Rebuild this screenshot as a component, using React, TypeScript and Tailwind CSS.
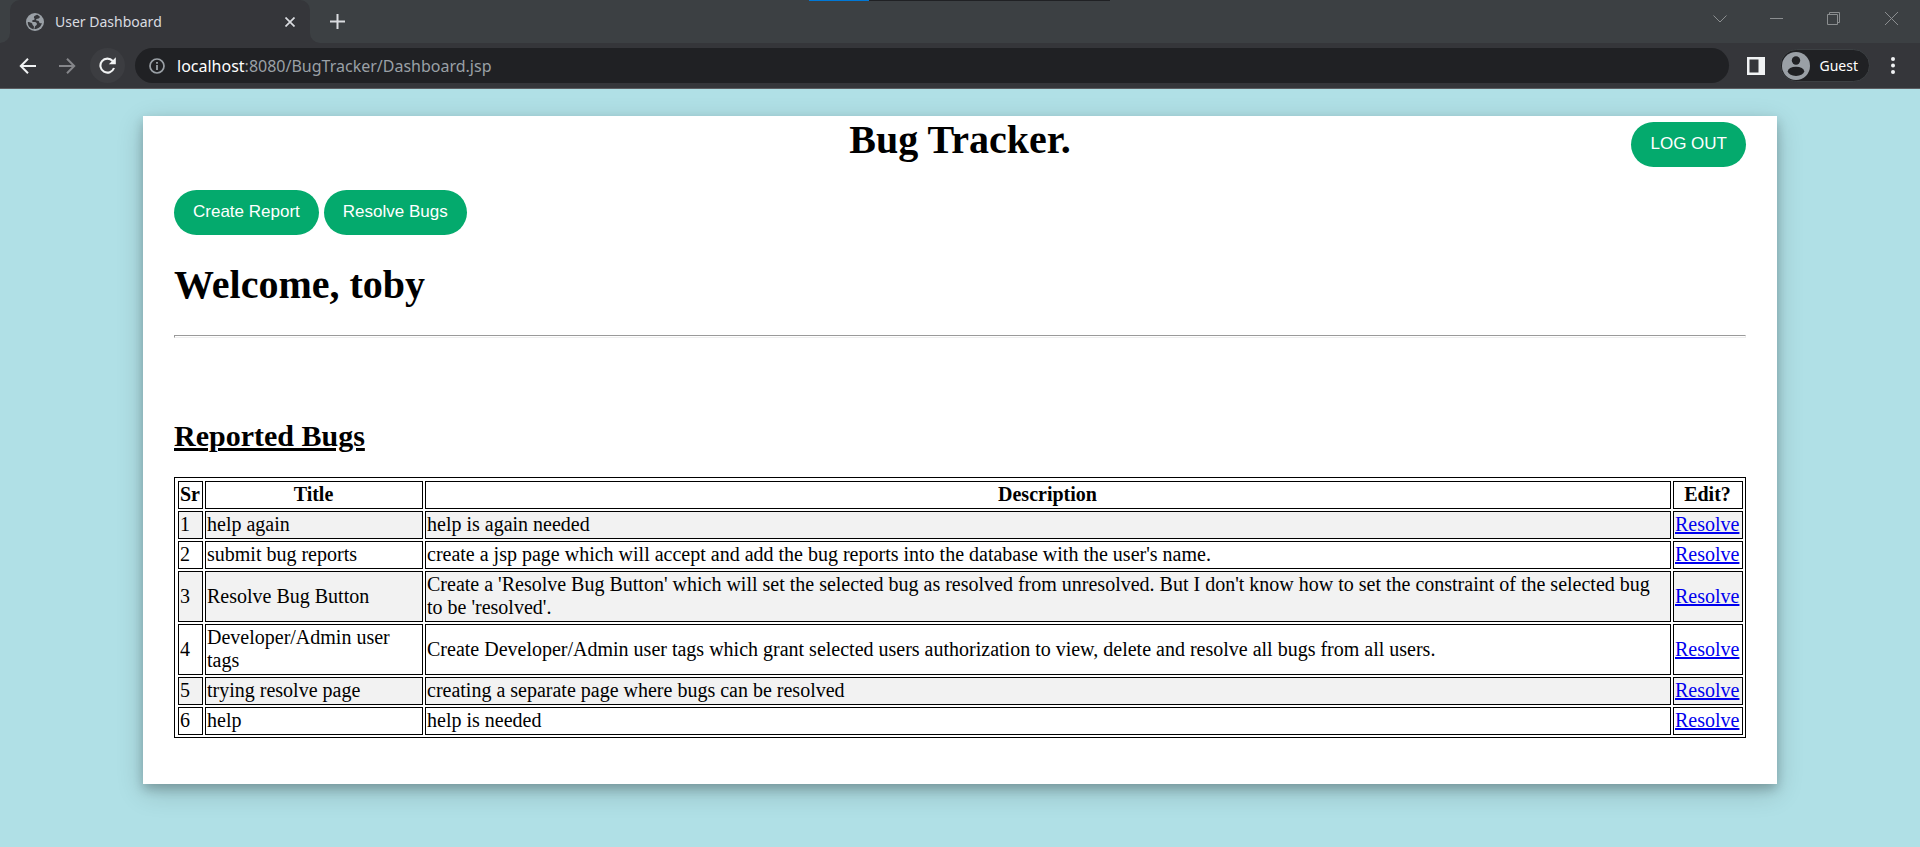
import React from "react";

type Bug = { id: number; title: string; description: string };

const bugs: Bug[] = [
  { id: 1, title: "help again", description: "help is again needed" },
  {
    id: 2,
    title: "submit bug reports",
    description: "create a jsp page which will accept and add the bug reports into the database with the user's name.",
  },
  {
    id: 3,
    title: "Resolve Bug Button",
    description:
      "Create a 'Resolve Bug Button' which will set the selected bug as resolved from unresolved. But I don't know how to set the constraint of the selected bug to be 'resolved'.",
  },
  {
    id: 4,
    title: "Developer/Admin user tags",
    description:
      "Create Developer/Admin user tags which grant selected users authorization to view, delete and resolve all bugs from all users.",
  },
  { id: 5, title: "trying resolve page", description: "creating a separate page where bugs can be resolved" },
  { id: 6, title: "help", description: "help is needed" },
];

function TabStrip() {
  return (
    <div className="relative flex h-[43px] items-stretch bg-[#3c4043]">
      <div className="absolute left-1/2 top-0 -ml-[151px] flex h-px w-[301px] bg-[#202124]">
        <span className="w-[60px] bg-[#0078d7]" />
      </div>
      <svg className="mt-auto block" width="10" height="10" viewBox="0 0 10 10" aria-hidden="true">
        <path d="M10 0v10H0a10 10 0 0 0 10-10z" fill="#35363a" />
      </svg>
      <div className="flex w-[300px] items-center rounded-t-[10px] bg-[#35363a] pl-4 pr-[10px]">
        <svg width="18" height="18" viewBox="0 0 18 18" aria-hidden="true">
          <circle cx="9" cy="9" r="9" fill="#9aa0a6" />
          <path
            d="M11 1.800C9.600 2.500 8.100 2.900 7.900 4.200c-.1.900.9 1.200.7 2.100-.3 1-2 .5-2.500 1.500-.3.900.7 1.300 1.900 1.300 1.600 0 2.900.4 2.900 1.800 0 1.500-1.700 1.600-2 2.900-.2.900-.3 1.700-.7 2.300 4 .2 7-2.500 7.700-6-.8.400-2 .3-2.500-.4-.5-.8-.2-1.400-1.100-1.900-.8-.4-1.900-.1-2.200-.9-.2-.8.800-1.100 1.700-1.200 1.200-.1 1.800-.7 2.200-1.600C13.300 3 12.200 2.200 11 1.800zM1.800 9c1.500 0 3.500.5 4.300 1.500.6.800.1 1.400 1 2 .9.500 1 1.200.8 2.200l-.4 1.500C4 15.600 1.600 12.600 1.800 9z"
            fill="#35363a"
          />
        </svg>
        <span className="ml-[11px] grow font-['Noto_Sans',sans-serif] text-[14px] leading-5 text-[#dadce0]">
          User Dashboard
        </span>
        <button type="button" aria-label="Close tab" className="flex size-5 items-center justify-center text-[#dadce0]">
          <svg width="10" height="10" viewBox="0 0 10 10" stroke="currentColor" strokeWidth="1.7">
            <path d="M.5.5l9 9M9.500.5l-9 9" />
          </svg>
        </button>
      </div>
      <svg className="mt-auto block" width="10" height="10" viewBox="0 0 10 10" aria-hidden="true">
        <path d="M0 0v10h10a10 10 0 0 1-10-10z" fill="#35363a" />
      </svg>
      <button type="button" aria-label="New tab" className="flex w-[35px] items-center justify-center text-[#dadce0]">
        <svg width="15" height="15" viewBox="0 0 15 15" stroke="currentColor" strokeWidth="2">
          <path d="M7.500 0v15M0 7.500h15" />
        </svg>
      </button>
      <div className="ml-auto flex h-[37px] text-[#8b8e90]">
        <button type="button" aria-label="Search tabs" className="flex w-[57px] items-center justify-center">
          <svg width="14" height="8" viewBox="0 0 14 8" fill="none" stroke="currentColor">
            <path d="M.5.5L7 7l6.500-6.500" />
          </svg>
        </button>
        <button type="button" aria-label="Minimize" className="flex w-[57px] items-center justify-center">
          <span className="h-px w-[13px] bg-current" />
        </button>
        <button type="button" aria-label="Restore" className="flex w-[57px] items-center justify-center">
          <svg width="13" height="13" viewBox="0 0 13 13" fill="none" stroke="currentColor">
            <path d="M.5 2.500h10v10H.5zM2.500 2.500v-2h10v10h-2" />
          </svg>
        </button>
        <button type="button" aria-label="Close" className="flex w-[58px] items-center justify-center">
          <svg width="13" height="13" viewBox="0 0 13 13" stroke="currentColor">
            <path d="M0 0l13 13M13 0L0 13" />
          </svg>
        </button>
      </div>
    </div>
  );
}

function Toolbar() {
  return (
    <div className="flex h-[46px] items-center gap-[5px] border-b border-[#5c5d61] bg-[#35363a] px-[10px]">
      <button type="button" aria-label="Back" className="flex size-[35px] items-center justify-center text-[#f1f3f4]">
        <svg width="17" height="16" viewBox="0 0 17 16" fill="none" stroke="currentColor" strokeWidth="2">
          <path d="M17 8H2M9 .8L1.800 8 9 15.200" />
        </svg>
      </button>
      <button type="button" aria-label="Forward" className="flex size-[35px] items-center justify-center text-[#85868a]">
        <svg width="17" height="16" viewBox="0 0 17 16" fill="none" stroke="currentColor" strokeWidth="2">
          <path d="M0 8h15M8 .8L15.200 8 8 15.200" />
        </svg>
      </button>
      <button
        type="button"
        aria-label="Reload"
        className="flex size-[35px] items-center justify-center rounded-full bg-[#3c3d41] text-[#f1f3f4]"
      >
        <svg width="17" height="17" viewBox="0 0 17 17">
          <path d="M13.700 4A7 7 0 1 0 15 11" fill="none" stroke="currentColor" strokeWidth="2.100" />
          <path d="M16.800.300v7h-7z" fill="currentColor" />
        </svg>
      </button>
      <div className="ml-[5px] flex h-[35px] grow items-center rounded-full bg-[#202124] pl-[14px]">
        <svg width="16" height="16" viewBox="0 0 16 16" fill="none" stroke="#9aa0a6" aria-hidden="true">
          <circle cx="8" cy="8" r="7" strokeWidth="1.700" />
          <path d="M8 7v5M8 4v1.800" strokeWidth="1.800" />
        </svg>
        <span className="ml-3 font-['Noto_Sans',sans-serif] text-[16px] leading-6 text-[#9aa0a6]">
          <span className="text-white">localhost</span>:8080/BugTracker/Dashboard.jsp
        </span>
      </div>
      <button type="button" aria-label="Side panel" className="ml-[13px]">
        <svg width="18" height="18" viewBox="0 0 18 18">
          <path d="M0 0h18v18H0zM2.500 2.500v13h9v-13z" fill="#f1f3f4" fillRule="evenodd" />
        </svg>
      </button>
      <button
        type="button"
        className="ml-[10px] flex h-[33px] items-center rounded-full border border-[#3c4043] bg-[#202124] pl-px pr-[11px] font-['Noto_Sans',sans-serif] text-[14px] leading-5 text-white"
      >
        <svg className="mr-[10px]" width="28" height="28" viewBox="0 0 28 28" aria-hidden="true">
          <circle cx="14" cy="14" r="14" fill="#9aa0a6" />
          <circle cx="14" cy="8.500" r="4.200" fill="#202124" />
          <ellipse cx="14" cy="19.300" rx="8.200" ry="4.600" fill="#202124" />
        </svg>
        Guest
      </button>
      <button type="button" aria-label="Menu" className="flex size-[35px] items-center justify-center text-[#f1f3f4]">
        <svg width="4" height="17" viewBox="0 0 4 17" fill="currentColor">
          <circle cx="2" cy="2" r="2" />
          <circle cx="2" cy="8.500" r="2" />
          <circle cx="2" cy="15" r="2" />
        </svg>
      </button>
    </div>
  );
}

function PillButton({ children }: { children: React.ReactNode }) {
  return (
    <button
      type="button"
      className="h-[45px] rounded-full bg-[#04aa6d] px-[19px] pb-px font-['Liberation_Sans',Arial,sans-serif] text-[17px] leading-5 text-white"
    >
      {children}
    </button>
  );
}

const cell = "border border-black pl-px pr-[2px] pt-px pb-[2px]";

export default function App() {
  return (
    <div className="flex min-h-screen flex-col bg-[#b0e0e6]">
      <header>
        <TabStrip />
        <Toolbar />
      </header>
      <main className="mx-[143px] mt-[27px] mb-[63px] bg-white px-[31px] pb-[46px] font-['Liberation_Serif','Times_New_Roman',serif] text-[20px] leading-[23px] text-black shadow-[0_5px_10px_0_rgba(0,0,0,0.2),0_8px_25px_0_rgba(0,0,0,0.19)]">
        <div className="grid grid-cols-[1fr_auto_1fr] items-start">
          <h1 className="col-start-2 text-[40px] leading-12 font-bold">Bug Tracker.</h1>
          <div className="mt-[6px] flex justify-end">
            <PillButton>LOG OUT</PillButton>
          </div>
        </div>
        <nav className="mt-[23px] flex gap-[5px]">
          <PillButton>Create Report</PillButton>
          <PillButton>Resolve Bugs</PillButton>
        </nav>
        <h1 className="mt-[26px] text-[40px] leading-12 font-bold">Welcome, toby</h1>
        <hr className="mt-[26px] h-[3px] border border-[#9a9a9a] border-r-[#eeeeee] border-b-[#eeeeee]" />
        <h2 className="mt-[81px] text-[30px] leading-[34px] font-bold underline">Reported Bugs</h2>
        <table className="mt-6 w-full border-separate border-spacing-[2px] border border-black pt-px pl-px">
          <thead>
            <tr>
              <th className={`${cell} w-[25px]`}>Sr</th>
              <th className={`${cell} w-[218px]`}>Title</th>
              <th className={cell}>Description</th>
              <th className={`${cell} w-[70px]`}>Edit?</th>
            </tr>
          </thead>
          <tbody>
            {bugs.map((bug) => (
              <tr key={bug.id} className="odd:bg-[#f2f2f2]">
                <td className={cell}>{bug.id}</td>
                <td className={cell}>{bug.title}</td>
                <td className={cell}>{bug.description}</td>
                <td className={cell}>
                  <a href="#resolve" className="text-[#0000ee] underline">
                    Resolve
                  </a>
                </td>
              </tr>
            ))}
          </tbody>
        </table>
      </main>
    </div>
  );
}
